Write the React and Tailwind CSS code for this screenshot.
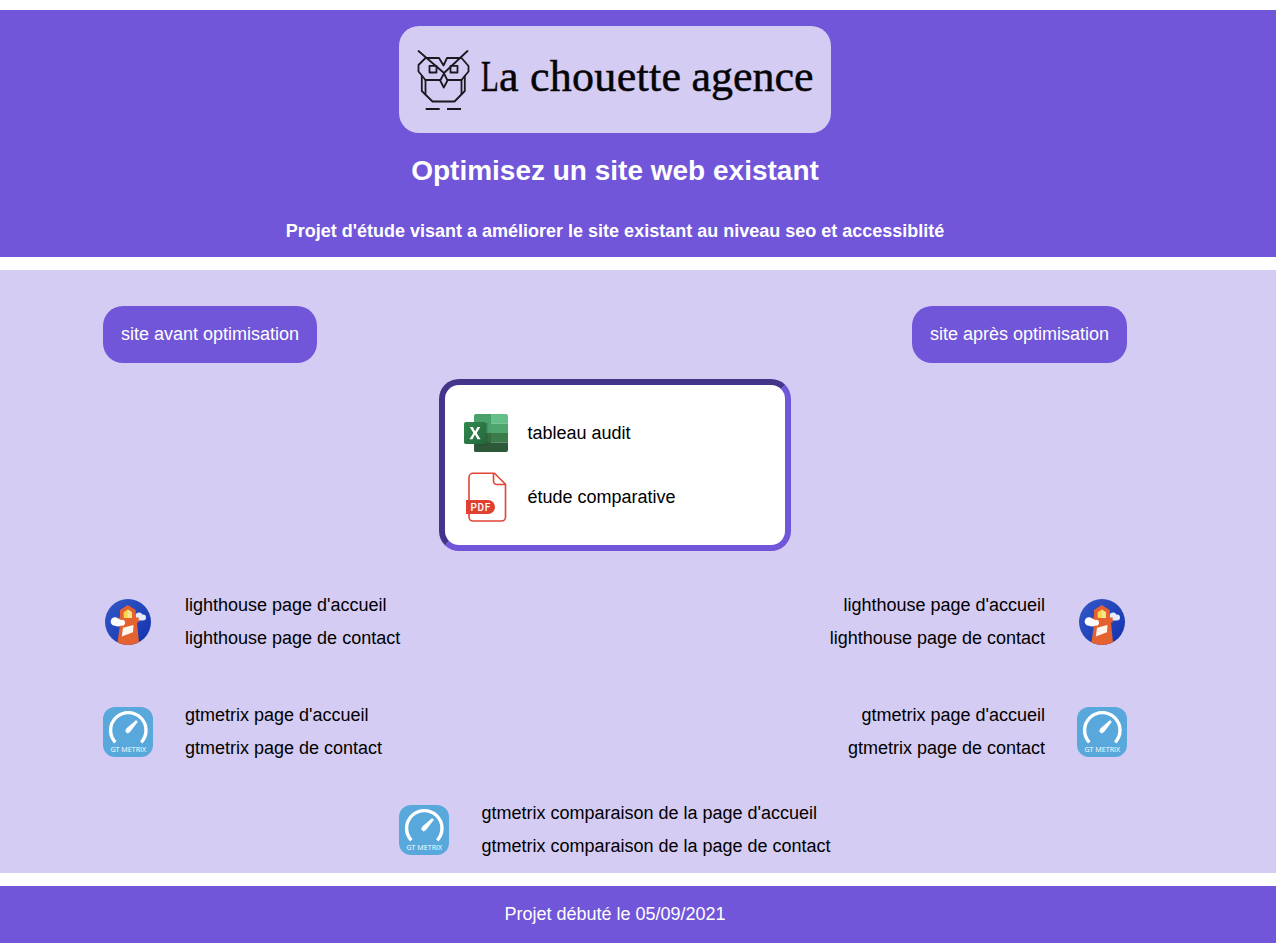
function Logo() {
  return (
    <svg width="432" height="107" viewBox="399 26 432 107" role="img" aria-label="La chouette agence">
      <g fill="none" stroke="#1b181f" strokeWidth="1.8" strokeLinecap="round" strokeLinejoin="round">
        <path d="M418.500 51 444 73 467.500 51" />
        <path d="M425.500 58H439l4.500 7.500L447 58h14.500l7 8v5.500l-7 8.500h-36l-7-8.500V65z" />
        <path d="M421.800 76v15l10.700 10.500h22l10.300-10.500V76" />
        <path d="M425.500 80v14M461.500 80v14" />
        <path d="M429.500 65.800h7v6.700h-7zM450.500 65.800h7v6.700h-7z" />
        <path d="M444 73.500l-3.800 7 3.600 7 3.700-7z" fill="#d5ccf3" />
        <path d="M425.700 109h14M447 109h14" strokeWidth="2" strokeLinecap="butt" />
      </g>
      <g className="font-['Liberation_Serif',serif]" fontSize="44" fill="#050407" stroke="#050407" strokeWidth="0.5">
        <text transform="translate(481 91) scale(.66 1)">L</text>
        <text x="499" y="91">a</text>
        <text x="530" y="91" textLength="151" lengthAdjust="spacing">chouette</text>
        <text x="691.500" y="91" textLength="122" lengthAdjust="spacing">agence</text>
      </g>
    </svg>
  );
}

function Excel() {
  return (
    <svg width="50" height="50" viewBox="461 408 50 50" className="shrink-0">
      <defs>
        <clipPath id="sheet"><rect x="474" y="414" width="34" height="38" rx="2" /></clipPath>
        <linearGradient id="tile" x1="0" y1="0" x2="1" y2="1">
          <stop stopColor="#33884f" /><stop offset="1" stopColor="#23683a" />
        </linearGradient>
      </defs>
      <g clipPath="url(#sheet)">
        <path fill="#4aa06a" d="M474 414h17v19h-17z" />
        <path fill="#64c089" d="M491 414h17v9.500h-17z" />
        <path fill="#50a56d" d="M491 423.500h17v9.500h-17z" />
        <path fill="#356d40" d="M474 433h17v19h-17z" />
        <path fill="#3c7c48" d="M491 433h17v9.500h-17z" />
        <path fill="#2d5938" d="M474 442.500h34v9.500h-34z" />
        <rect x="474" y="423" width="13.500" height="23" fill="#204d30" opacity=".35" />
      </g>
      <rect x="464" y="422" width="22" height="22" rx="1.700" fill="url(#tile)" />
      <path d="M469.800 427h3.100l2.200 4.500 2.200-4.500h3.100l-3.700 6 3.900 6.200h-3.200l-2.400-4.600-2.500 4.600h-3.100l4-6.200z" fill="#fff" />
    </svg>
  );
}

function Pdf() {
  return (
    <svg width="50" height="50" viewBox="461 472 50 50" className="shrink-0">
      <path d="M473 473.300h21.500l11 11V517a4 4 0 0 1-4 4H473a4 4 0 0 1-4-4v-39.700a4 4 0 0 1 4-4zM493.500 473.300V481a3.500 3.500 0 0 0 3.500 3.500h8.500" fill="#fff" stroke="#e04434" strokeWidth="1.600" strokeLinejoin="round" />
      <path d="M466 500h22a7 7 0 0 1 0 14h-22z" fill="#df402f" />
      <text x="470.400" y="511" textLength="19.800" lengthAdjust="spacing" className="font-['Roboto',sans-serif]" fontSize="10" fontWeight="500" fill="#fff">PDF</text>
    </svg>
  );
}

function Lighthouse() {
  return (
    <svg width="50" height="50" viewBox="103 597 50 50" className="shrink-0">
      <defs>
        <linearGradient id="sky" x1="0" y1="0" x2="1" y2="1">
          <stop stopColor="#3459c8" /><stop offset="1" stopColor="#1231ad" />
        </linearGradient>
        <clipPath id="disc"><circle cx="128" cy="622" r="23" /></clipPath>
      </defs>
      <circle cx="128" cy="622" r="23" fill="url(#sky)" />
      <g clipPath="url(#disc)">
        <g fill="#e5ebfc">
          <circle cx="139" cy="616" r="3.500" />
          <circle cx="143" cy="617.500" r="3" />
          <path d="M136 615h6v5.500h-6z" />
        </g>
        <path d="M120 610l7.700-5 8 5v7.500h3v5h-1.700l2.300 23h-22.300l3.300-23h-2v-5h1.700z" fill="#e3622f" />
        <path d="M123.700 612.300l4.100-2.800 4.100 2.800v5.700h-8.200z" fill="#f6d84f" />
        <path d="M127.800 609.500l4.100 2.800v5.700h-4.100z" fill="#f8e68e" />
        <path d="M123 627.700l10.500-2.700-.5 7.200-11.200 4.300z" fill="#fff5ec" />
        <g fill="#fff">
          <circle cx="115" cy="621.500" r="4.300" />
          <circle cx="118" cy="622.800" r="3.700" />
          <circle cx="122" cy="622.800" r="3" />
        </g>
      </g>
    </svg>
  );
}

function Gtmetrix() {
  return (
    <svg width="50" height="50" viewBox="103 707 50 50" className="shrink-0">
      <rect x="103" y="707" width="50" height="50" rx="12" fill="#58a8dc" />
      <path d="M115.300 742.300a17.700 17.700 0 1 1 26 0" fill="none" stroke="#fff" strokeWidth="3.400" />
      <path d="M136 720.500l1.500 1.300-7.500 9.900-2.500 1.500-2-2 1.200-2.700z" fill="#fff" stroke="#fff" strokeWidth=".6" strokeLinejoin="round" />
      <text x="110.400" y="752.200" textLength="35.800" lengthAdjust="spacingAndGlyphs" className="font-['Open_Sans',sans-serif]" fontSize="7" fill="#fff">GT METRIX</text>
    </svg>
  );
}

function Report({ icon, lines, reverse = false }) {
  return (
    <div className={`flex gap-8 ${reverse ? "flex-row-reverse text-right" : ""}`}>
      <div className="pt-2">{icon}</div>
      <ul className="leading-[33px]">
        {lines.map((line) => <li key={line}><a>{line}</a></li>)}
      </ul>
    </div>
  );
}

const lighthouse = ["lighthouse page d'accueil", "lighthouse page de contact"];
const gtmetrix = ["gtmetrix page d'accueil", "gtmetrix page de contact"];

export default function App() {
  return (
    <div className="h-[950px] overflow-hidden bg-white pt-[10px] font-['Liberation_Sans',Arial,sans-serif] text-[18px] text-black">
      <header className="h-[247px] bg-[#7156d9] pt-4 text-white">
        <div className="flex w-[1230px] flex-col items-center">
          <div className="h-[107px] w-[432px] overflow-hidden rounded-[20px] bg-[#d5ccf3]"><Logo /></div>
          <h1 className="mt-[22px] text-[28px] leading-8 font-bold">Optimisez un site web existant</h1>
          <h2 className="mt-[34px] text-[18px] leading-5 font-bold">Projet d'étude visant a améliorer le site existant au niveau seo et accessiblité</h2>
        </div>
      </header>
      <main className="mt-[13px] h-[603px] bg-[#d5ccf3] pt-9">
        <div className="flex w-[1230px] flex-col items-center">
          <nav className="flex w-[1024px] justify-between leading-[57px] text-white">
            <a className="h-[57px] w-[214px] rounded-[20px] bg-[#7156d9] text-center">site avant optimisation</a>
            <a className="h-[57px] w-[215px] rounded-[20px] bg-[#7156d9] text-center">site après optimisation</a>
          </nav>
          <section className="mt-4 flex h-[172px] w-[352px] flex-col gap-[14px] rounded-[20px] border-[6px] border-t-[#46348a] border-r-[#7156d9] border-b-[#7156d9] border-l-[#46348a] bg-white px-4 pt-[23px]">
            <a className="flex items-center gap-[16.500px]"><Excel />tableau audit</a>
            <a className="flex items-center gap-[16.500px]"><Pdf />étude comparative</a>
          </section>
          <div className="mt-[38px] flex w-[1024px] justify-between">
            <Report icon={<Lighthouse />} lines={lighthouse} />
            <Report icon={<Lighthouse />} lines={lighthouse} reverse />
          </div>
          <div className="mt-11 flex w-[1024px] justify-between">
            <Report icon={<Gtmetrix />} lines={gtmetrix} />
            <Report icon={<Gtmetrix />} lines={gtmetrix} reverse />
          </div>
          <div className="mt-8">
            <Report icon={<Gtmetrix />} lines={["gtmetrix comparaison de la page d'accueil", "gtmetrix comparaison de la page de contact"]} />
          </div>
        </div>
      </main>
      <footer className="mt-[13px] h-[57px] bg-[#7156d9] text-white">
        <p className="w-[1230px] text-center leading-[57px]">Projet débuté le 05/09/2021</p>
      </footer>
    </div>
  );
}
